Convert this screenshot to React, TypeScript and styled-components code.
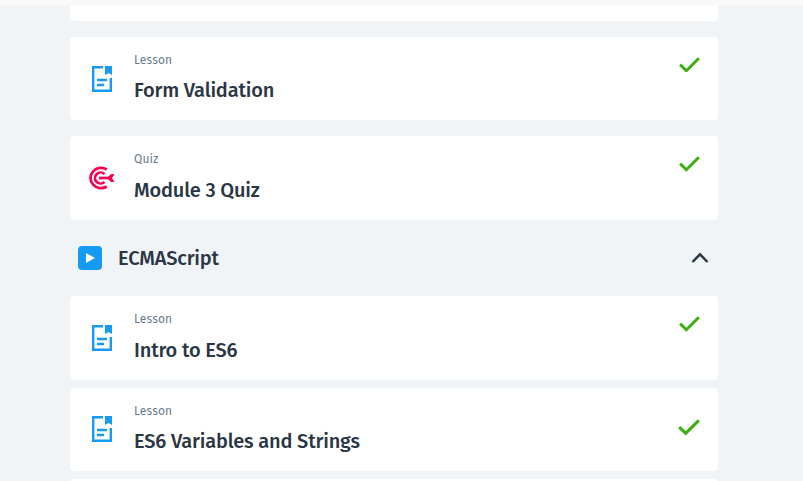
import React from "react";
import styled, { createGlobalStyle } from "styled-components";

const GlobalStyle = createGlobalStyle`
  * { box-sizing: border-box; }
  body { margin: 0; background: #f0f4f7; overflow: hidden; }
`;

const Page = styled.div`
  height: 481px;
  overflow: hidden;
  background: #f0f4f7;
  color: #2a3644;
  font-family: "Fira Sans", "Open Sans", "Noto Sans", sans-serif;
`;

const TopBar = styled.div`
  height: 6px;
  background: #f9f9f9;
`;

const Course = styled.main`
  width: 648px;
  margin-left: 70px;
`;

const CardTail = styled.div`
  height: 15px;
  margin-bottom: 15.8px;
  background: #fff;
  border-radius: 0 0 4px 4px;
`;

const CardHead = styled.div`
  height: 20px;
  background: #fff;
  border-radius: 4px 4px 0 0;
`;

const List = styled.div<{ $gap: number }>`
  display: flex;
  flex-direction: column;
  gap: ${(p) => p.$gap}px;
`;

const Card = styled.article`
  display: flex;
  height: 83.6px;
  padding: 0 18px 0 16px;
  background: #fff;
  border-radius: 4px;
`;

const IconSlot = styled.div`
  display: flex;
  flex: none;
  align-items: center;
  width: 48px;
`;

const Texts = styled.div`
  flex: 1;
  padding-top: 13px;
`;

const Kind = styled.div`
  height: 20px;
  color: #677c91;
  font-size: 12px;
  letter-spacing: 0.15px;
  line-height: 20px;
`;

const Title = styled.h3`
  margin: 6.6px 0 0;
  font-size: 20px;
  font-weight: 500;
  letter-spacing: -0.17px;
  line-height: 28px;
`;

const Status = styled.div<{ $centered?: boolean }>`
  display: flex;
  align-items: ${(p) => (p.$centered ? "center" : "flex-start")};
  padding-top: ${(p) => (p.$centered ? 0 : 19.8)}px;
  padding-bottom: ${(p) => (p.$centered ? 4 : 0)}px;
`;

const SectionHeader = styled.header`
  display: flex;
  align-items: center;
  height: 76px;
  padding: 0 9px 0 8px;
`;

const SectionTitle = styled.h2`
  flex: 1;
  margin: 0 0 0 16px;
  font-size: 20px;
  font-weight: 500;
  letter-spacing: -0.17px;
  line-height: 28px;
`;

const LessonIcon = () => (
  <svg width="32" height="32" viewBox="0 0 32 32" fill="none">
    <path d="M17 4.2H7.2V27.8H24.8V15" stroke="#159bf3" strokeWidth="2.4" />
    <path d="M19 3H26V12L22.5 10L19 12Z" fill="#159bf3" />
    <path d="M11 17H21M11 22H18" stroke="#159bf3" strokeWidth="2.4" />
  </svg>
);

const QuizIcon = () => (
  <svg width="32" height="32" viewBox="0 0 32 32" fill="none" stroke="#f50057" strokeWidth="2.7">
    <path d="M20.8 7.5A10.5 10.2 0 1 0 20.8 24.5" />
    <path d="M18.5 11.9A5.7 5.5 0 1 0 18.5 20.1" />
    <path d="M13 16H25" />
    <path d="M28 12H25L21 16L25 20H28V19L26 16L28 13Z" fill="#f50057" stroke="none" />
  </svg>
);

const Check = ({ size = 21 }: { size?: number }) => (
  <svg width={size} height={size * 0.75} viewBox="0 0 20 15" fill="none">
    <path d="M1.1 7.3L7 13.1L18.9 1.2" stroke="#3dad0f" strokeWidth="2.8" />
  </svg>
);

const PlayIcon = () => (
  <svg width="24" height="24" viewBox="0 0 24 24">
    <rect width="24" height="24" rx="4" fill="#159bf3" />
    <path d="M8 7V17L17 12Z" fill="#fff" />
  </svg>
);

const ChevronUp = () => (
  <svg width="18" height="12" viewBox="0 0 18 12" fill="none">
    <path d="M1.5 10L9 2.3L16.5 10" stroke="#2a3644" strokeWidth="2.5" />
  </svg>
);

type Item = {
  kind: "Lesson" | "Quiz";
  title: string;
  current?: boolean;
};

const moduleItems: Item[] = [
  { kind: "Lesson", title: "Form Validation" },
  { kind: "Quiz", title: "Module 3 Quiz" },
];

const scriptItems: Item[] = [
  { kind: "Lesson", title: "Intro to ES6" },
  { kind: "Lesson", title: "ES6 Variables and Strings", current: true },
];

const CourseCard = ({ item }: { item: Item }) => (
  <Card>
    <IconSlot>{item.kind === "Quiz" ? <QuizIcon /> : <LessonIcon />}</IconSlot>
    <Texts>
      <Kind>{item.kind}</Kind>
      <Title>{item.title}</Title>
    </Texts>
    <Status $centered={item.current}>
      <Check size={item.current ? 22 : 21} />
    </Status>
  </Card>
);

export default function App() {
  return (
    <Page>
      <GlobalStyle />
      <TopBar />
      <Course>
        <CardTail />
        <List $gap={16}>
          {moduleItems.map((item) => <CourseCard key={item.title} item={item} />)}
        </List>
        <SectionHeader>
          <PlayIcon />
          <SectionTitle>ECMAScript</SectionTitle>
          <ChevronUp />
        </SectionHeader>
        <List $gap={8}>
          {scriptItems.map((item) => <CourseCard key={item.title} item={item} />)}
          <CardHead />
        </List>
      </Course>
    </Page>
  );
}
